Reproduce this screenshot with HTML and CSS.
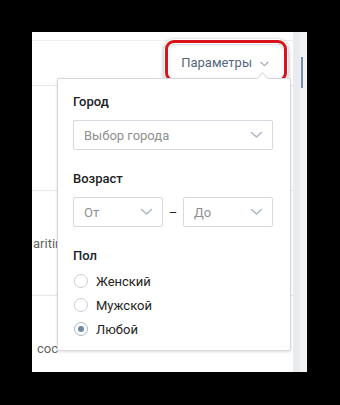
FILE: index.html
```html
<!DOCTYPE html>
<html lang="ru">
<head>
<meta charset="utf-8">
<link rel="stylesheet" href="styles.css">
</head>
<body>
<div class="frame">
  <div class="main">
    <div class="topbar"></div>
    <div class="toolbar">
      <span class="params">Параметры</span>
      <svg class="params-chev" width="9" height="6" viewBox="0 0 9 6"><path d="M1 1.2 L4.5 4.6 L8 1.2" fill="none" stroke="#a3afbd" stroke-width="1.3" stroke-linecap="round" stroke-linejoin="round"/></svg>
    </div>
    <div class="list">
      <div class="item"></div>
      <div class="item"><span class="item-text">aritin</span></div>
      <div class="item"><span class="item-text shift">сос</span></div>
    </div>

    <div class="highlight"></div>

    <div class="popup">
      <div class="popup-arrow"></div>
      <div class="label">Город</div>
      <div class="select wide">
        <span>Выбор города</span>
        <svg class="chev" width="13" height="8" viewBox="0 0 13 8"><path d="M1.5 1.5 L6.5 6 L11.5 1.5" fill="none" stroke="#aab7c7" stroke-width="1.5" stroke-linecap="round" stroke-linejoin="round"/></svg>
      </div>
      <div class="label sec">Возраст</div>
      <div class="age-row">
        <div class="select half">
          <span>От</span>
          <svg class="chev" width="13" height="8" viewBox="0 0 13 8"><path d="M1.5 1.5 L6.5 6 L11.5 1.5" fill="none" stroke="#aab7c7" stroke-width="1.5" stroke-linecap="round" stroke-linejoin="round"/></svg>
        </div>
        <span class="dash">–</span>
        <div class="select half">
          <span>До</span>
          <svg class="chev" width="13" height="8" viewBox="0 0 13 8"><path d="M1.5 1.5 L6.5 6 L11.5 1.5" fill="none" stroke="#aab7c7" stroke-width="1.5" stroke-linecap="round" stroke-linejoin="round"/></svg>
        </div>
      </div>
      <div class="label sec tight">Пол</div>
      <div class="radios">
        <div class="radio"><span class="circle"></span><span>Женский</span></div>
        <div class="radio"><span class="circle"></span><span>Мужской</span></div>
        <div class="radio"><span class="circle on"></span><span>Любой</span></div>
      </div>
    </div>
  </div>
  <div class="side">
    <div class="side-gap"></div>
    <div class="side-panel"><div class="side-bar"></div></div>
  </div>
</div>
</body>
</html>
```
FILE: styles.css
```css
html, body {
  margin: 0;
  padding: 0;
  background: #000;
}
body {
  font-family: Roboto, "Open Sans", "Liberation Sans", sans-serif;
  font-size: 13px;
  color: #222;
}
.frame {
  margin: 32px 0 0 32px;
  width: 275px;
  height: 340px;
  display: flex;
}
.main {
  position: relative;
  width: 261px;
  background: #fff;
  overflow: hidden;
}
.topbar {
  height: 8px;
  border-bottom: 1px solid #eceef1;
}
.toolbar {
  height: 44px;
  display: flex;
  align-items: center;
  justify-content: flex-end;
  padding-right: 24px;
}
.params {
  color: #55677d;
  line-height: 16px;
}
.params-chev {
  margin-left: 8px;
  margin-top: 1px;
}
.item {
  height: 105px;
  border-top: 1px solid #e7e8ec;
  box-sizing: border-box;
  display: flex;
  align-items: center;
}
.item-text {
  color: #656565;
  padding-left: 1px;
  white-space: nowrap;
}
.item-text.shift {
  padding-left: 5px;
}
.highlight {
  position: absolute;
  left: 133px;
  top: 8px;
  width: 122px;
  height: 42px;
  box-sizing: border-box;
  border: 3px solid #d9131c;
  border-radius: 9px;
  box-shadow: 0 0 0 1px #fff, 0 1px 4px 1px rgba(0,0,0,0.35), inset 0 0 0 1px #fff, inset 0 1px 3px rgba(0,0,0,0.3);
}
.popup {
  position: absolute;
  left: 25px;
  top: 46px;
  width: 234px;
  box-sizing: border-box;
  background: #fff;
  border: 1px solid #d3d9de;
  border-radius: 2px;
  box-shadow: 0 1px 3px rgba(0,0,0,0.12);
  padding: 15px 16px 9px 15px;
}
.popup-arrow {
  position: absolute;
  top: -5px;
  left: 200px;
  width: 8px;
  height: 8px;
  background: #fff;
  border-left: 1px solid #d3d9de;
  border-top: 1px solid #d3d9de;
  transform: rotate(45deg);
}
.label {
  font-weight: 500;
  line-height: 16px;
  margin-bottom: 10px;
  color: #222;
}
.label.sec {
  margin-top: 21px;
}
.label.tight {
  margin-bottom: 5px;
}
.select {
  height: 30px;
  box-sizing: border-box;
  border: 1px solid #d3d9de;
  border-radius: 2px;
  display: flex;
  align-items: center;
  justify-content: space-between;
  padding: 0 9px 0 10px;
  color: #8f8f8f;
}
.select.wide {
  width: 200px;
}
.select.half {
  width: 90px;
}
.chev {
  display: block;
}
.age-row {
  display: flex;
  align-items: center;
  width: 200px;
}
.dash {
  flex: 1;
  text-align: center;
  color: #222;
}
.radio {
  height: 24px;
  display: flex;
  align-items: center;
  gap: 8px;
  color: #222;
}
.circle {
  width: 14px;
  height: 14px;
  box-sizing: border-box;
  border: 1px solid #c5cfda;
  border-radius: 50%;
  margin-left: 1px;
  display: flex;
  align-items: center;
  justify-content: center;
}
.circle.on {
  border-color: #aab8c8;
}
.circle.on::after {
  content: "";
  width: 6px;
  height: 6px;
  border-radius: 50%;
  background: #6f88a7;
}
.side {
  width: 14px;
  display: flex;
}
.side-gap {
  width: 7px;
  background: #e9ebee;
}
.side-panel {
  flex: 1;
  background: #f2f3f5;
  padding-top: 25px;
}
.side-bar {
  margin-left: 1px;
  width: 2px;
  height: 31px;
  background: #6f8db2;
}
```
